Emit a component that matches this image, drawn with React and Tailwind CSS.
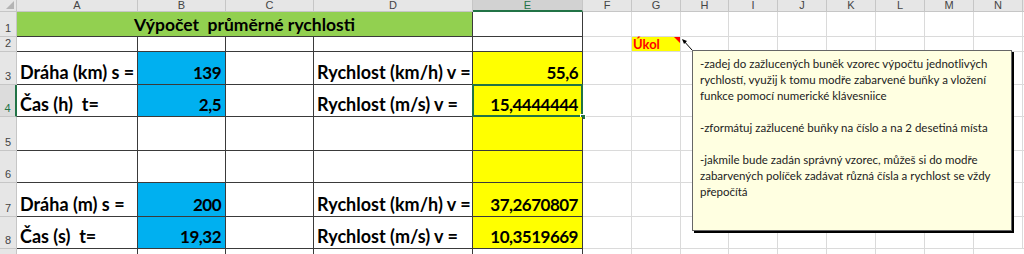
import React from "react";

const LETTERS = ["A", "B", "C", "D", "E", "F", "G", "H", "I", "J", "K", "L", "M", "N"];
const LIGHT = "border-r border-b border-[#dadada]";
const DARK = "border-r border-b border-[#3a3a3a]";
const HDR = "bg-[#e6e6e6] border-r border-b border-[#c6c6c6] text-[#444] text-[11px] font-['Liberation_Sans',sans-serif]";
const CELLTXT = "font-[Lato,sans-serif] font-bold text-[18px] text-black leading-none whitespace-pre";
const NUMTXT = "font-[Lato,sans-serif] font-bold text-[17px] tracking-[-0.5px] text-black leading-none whitespace-pre";

function RowHead({ n, sel }) {
  return (
    <div
      className={
        sel
          ? "bg-[#dcdcdc] border-r-2 border-b border-r-[#217346] border-b-[#c6c6c6] text-[#217346] text-[11px] font-['Liberation_Sans',sans-serif] flex items-end justify-center pb-[2px] leading-none"
          : HDR + " flex items-end justify-center pb-[2px] leading-none"
      }
    >
      {n}
    </div>
  );
}

function LightRest() {
  return (
    <>
      {LETTERS.slice(5).map((l) => (
        <div key={l} className={LIGHT} />
      ))}
      <div className="border-b border-[#dadada]" />
    </>
  );
}

function Label({ text }) {
  return (
    <div className={DARK + " flex items-end pl-[3px] pb-[3px] overflow-visible"}>
      <span className={CELLTXT}>{text}</span>
    </div>
  );
}

function Num({ text, bg, selected }) {
  return (
    <div className={DARK + " " + bg + " relative flex items-end justify-end pr-[4px] pb-[3px]"}>
      <span className={NUMTXT}>{text}</span>
      {selected && (
        <>
          <div className="absolute -left-[1px] -top-[1px] -right-[1px] -bottom-[1px] border-2 border-[#217346]" />
          <div className="absolute -right-[4px] -bottom-[4px] w-[6px] h-[6px] bg-[#217346] border border-white" />
        </>
      )}
    </div>
  );
}

function DataRow({ n, a, b, d, e, sel }) {
  return (
    <>
      <RowHead n={n} sel={sel} />
      {a ? <Label text={a} /> : <div className={DARK} />}
      {b ? <Num text={b} bg="bg-[#00b0f0]" /> : <div className={DARK} />}
      <div className={DARK} />
      {d ? <Label text={d} /> : <div className={DARK} />}
      <Num text={e || ""} bg="bg-[#ffff00]" selected={sel} />
      <LightRest />
    </>
  );
}

export default function App() {
  return (
    <div className="relative w-[1024px] h-[254px] overflow-hidden bg-white">
      <div className="grid w-full h-full grid-cols-[17px_121px_88px_88px_159px_110px_49px_49px_48px_49px_49px_49px_49px_49px_49px_1fr] grid-rows-[12px_25px_15px_33px_32px_34px_32px_34px_32px_1fr]">
        {/* header row */}
        <div className={HDR + " relative"}>
          <div className="absolute right-[2px] bottom-[2px] w-0 h-0 border-l-[8px] border-l-transparent border-b-[8px] border-b-[#b4b4b4]" />
        </div>
        {LETTERS.map((l) =>
          l === "E" ? (
            <div
              key={l}
              className="bg-[#d2d2d2] border-r border-[#c6c6c6] border-b-2 border-b-[#217346] text-[#217346] text-[11px] font-['Liberation_Sans',sans-serif] flex items-center justify-center leading-none"
            >
              {l}
            </div>
          ) : (
            <div key={l} className={HDR + " flex items-center justify-center leading-none"}>
              {l}
            </div>
          )
        )}
        <div className="bg-[#e6e6e6] border-b border-[#c6c6c6]" />

        {/* row 1 */}
        <RowHead n={1} />
        <div className="col-span-4 bg-[#92d050] border-r border-b border-[#3a3a3a] flex items-end justify-center pb-[3px]">
          <span className="font-[Lato,sans-serif] font-bold text-[17.5px] text-black leading-none whitespace-pre">Výpočet  průměrné rychlosti</span>
        </div>
        <div className={DARK + " bg-white"} />
        <LightRest />

        {/* row 2 */}
        <RowHead n={2} />
        <div className={DARK} />
        <div className={DARK} />
        <div className={DARK} />
        <div className={DARK} />
        <div className={DARK} />
        <div className={LIGHT} />
        <div className={LIGHT + " bg-[#ffff00] relative flex items-center pl-[1px]"}>
          <span className="font-[Lato,sans-serif] font-bold text-[13px] leading-none text-[#ff0000]">Úkol</span>
          <div className="absolute right-0 top-0 w-0 h-0 border-l-[6px] border-l-transparent border-t-[6px] border-t-[#ff0000]" />
        </div>
        {LETTERS.slice(7).map((l) => (
          <div key={l} className={LIGHT} />
        ))}
        <div className="border-b border-[#dadada]" />

        <DataRow n={3} a="Dráha (km) s =" b="139" d="Rychlost (km/h) v =" e="55,6" />
        <DataRow n={4} a="Čas (h)  t=" b="2,5" d="Rychlost (m/s) v =" e="15,4444444" sel />
        <DataRow n={5} />
        <DataRow n={6} />
        <DataRow n={7} a="Dráha (m) s =" b="200" d="Rychlost (km/h) v =" e="37,2670807" />
        <DataRow n={8} a="Čas (s)  t=" b="19,32" d="Rychlost (m/s) v =" e="10,3519669" />

        {/* row 9 partial */}
        <div className="bg-[#e6e6e6] border-r border-[#c6c6c6]" />
        <div className="border-r border-[#3a3a3a]" />
        <div className="border-r border-[#3a3a3a]" />
        <div className="border-r border-[#3a3a3a]" />
        <div className="border-r border-[#3a3a3a]" />
        <div className="border-r border-[#3a3a3a]" />
        {LETTERS.slice(6).map((l) => (
          <div key={l} className="border-r border-[#dadada]" />
        ))}
        <div />
      </div>

      {/* comment arrow */}
      <svg className="absolute left-[678px] top-[36px]" width="18" height="18" viewBox="0 0 18 18">
        <line x1="5" y1="4" x2="14" y2="14" stroke="#000" strokeWidth="1" />
        <polygon points="4,3 9,5 6,8" fill="#000" />
      </svg>

      {/* comment box */}
      <div className="absolute left-[692px] top-[50px] w-[320px] h-[181px] bg-[#ffffe1] border border-[#666] shadow-[2px_2px_0_#000] pl-[7px] pr-[4px] pt-[5px] font-[Lato,sans-serif] text-[11.5px] leading-[16px] text-[#222]">
        <p>-zadej do zažlucených buněk vzorec výpočtu jednotlivých rychlostí, využij k tomu modře zabarvené buňky a vložení funkce pomocí numerické klávesniice</p>
        <p className="mt-[16px]">-zformátuj zažlucené buňky na číslo a na 2 desetiná místa</p>
        <p className="mt-[16px]">-jakmile bude zadán správný vzorec, můžeš si do modře zabarvených políček zadávat různá čísla a rychlost se vždy přepočítá</p>
      </div>
    </div>
  );
}
